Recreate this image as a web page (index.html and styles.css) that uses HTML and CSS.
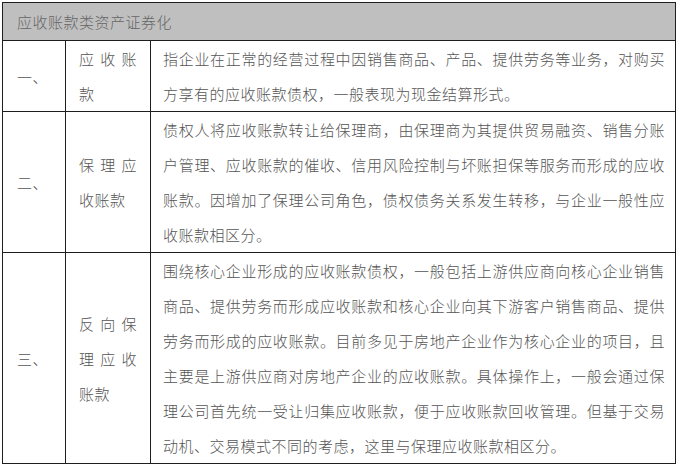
FILE: index.html
```html
<!DOCTYPE html>
<html lang="zh-CN">
<head>
<meta charset="utf-8">
<title>应收账款类资产证券化</title>
<link rel="stylesheet" href="styles.css">
</head>
<body>
<table class="abs-table">
  <colgroup>
    <col class="c-num">
    <col class="c-name">
    <col class="c-desc">
  </colgroup>
  <thead>
    <tr>
      <th colspan="3" class="head-cell">应收账款类资产证券化</th>
    </tr>
  </thead>
  <tbody>
    <tr class="r1">
      <td class="num">一、</td>
      <td class="name">应收账款</td>
      <td class="desc">指企业在正常的经营过程中因销售商品、产品、提供劳务等业务，对购买方享有的应收账款债权，一般表现为现金结算形式。</td>
    </tr>
    <tr class="r2">
      <td class="num">二、</td>
      <td class="name">保理应收账款</td>
      <td class="desc">债权人将应收账款转让给保理商，由保理商为其提供贸易融资、销售分账户管理、应收账款的催收、信用风险控制与坏账担保等服务而形成的应收账款。因增加了保理公司角色，债权债务关系发生转移，与企业一般性应收账款相区分。</td>
    </tr>
    <tr class="r3">
      <td class="num">三、</td>
      <td class="name">反向保理应收账款</td>
      <td class="desc">围绕核心企业形成的应收账款债权，一般包括上游供应商向核心企业销售商品、提供劳务而形成应收账款和核心企业向其下游客户销售商品、提供劳务而形成的应收账款。目前多见于房地产企业作为核心企业的项目，且主要是上游供应商对房地产企业的应收账款。具体操作上，一般会通过保理公司首先统一受让归集应收账款，便于应收账款回收管理。但基于交易动机、交易模式不同的考虑，这里与保理应收账款相区分。</td>
    </tr>
  </tbody>
</table>
</body>
</html>
```

FILE: styles.css
```css
html, body {
  margin: 0;
  padding: 0;
  background: #ffffff;
}

body {
  padding: 2px;
  font-family: "Noto Sans CJK SC", "Noto Sans", sans-serif;
  font-size: 15px;
  font-weight: 300;
  letter-spacing: 0.5px;
  color: #555555;
}

.abs-table {
  border-collapse: collapse;
  table-layout: fixed;
  width: 673px;
}

.c-num { width: 63px; }
.c-name { width: 85px; }
.c-desc { width: 525px; }

.abs-table th,
.abs-table td {
  border: 1px solid #1e1e1e;
  padding: 0;
  line-height: 35px;
  vertical-align: middle;
}

.head-cell {
  background: #bfbfbf;
  color: #666666;
  font-weight: 300;
  text-align: left;
  height: 37px;
  padding: 0 0 0 14px !important;
  line-height: 37px;
}

.num {
  padding-left: 14px !important;
  text-align: left;
}

.name {
  padding: 0 13px !important;
  text-align: justify;
}

.desc {
  padding: 0 10px 0 12px !important;
  text-align: justify;
}
```
